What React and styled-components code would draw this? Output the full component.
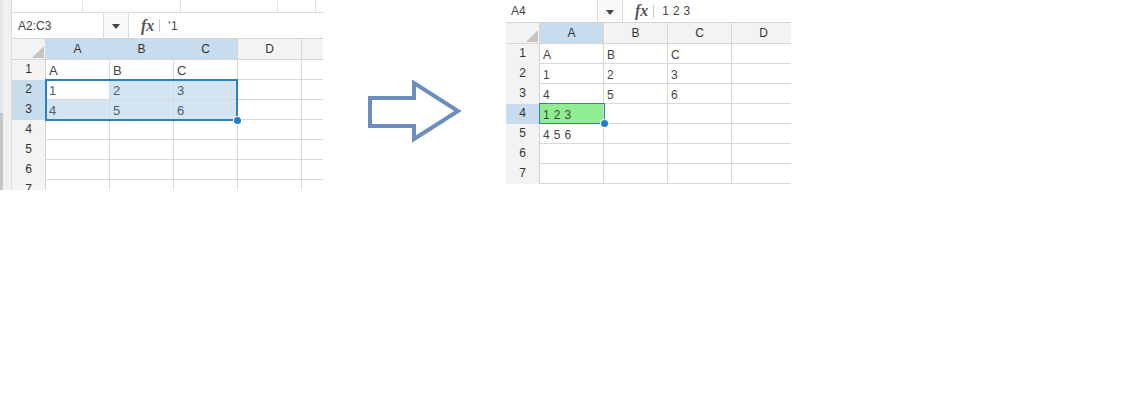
import React from 'react';
import styled, { createGlobalStyle } from 'styled-components';

const GlobalStyle = createGlobalStyle`
  *, *::before, *::after { box-sizing: border-box; }
  html, body { margin: 0; padding: 0; background: #fff; }
  body { font-family: "Liberation Sans", Arial, sans-serif; color: #444; }
`;

const COLS = ['A', 'B', 'C', 'D', ''];

const Page = styled.div`
  width: 1130px;
  height: 413px;
  display: flex;
  align-items: flex-start;
  background: #fff;
`;

const LeftShot = styled.div`
  width: 323px;
  height: 190px;
  display: flex;
  overflow: hidden;
  flex-shrink: 0;
`;

const Gutter = styled.div`
  width: 12px;
  height: 100%;
  flex-shrink: 0;
  display: flex;
  flex-direction: column;
  background: #f0f0f0;
  border-right: 1px solid #dcdcdc;

  &::before {
    content: '';
    width: 3px;
    height: 113px;
    background: #e6e6e6;
  }
  &::after {
    content: '';
    width: 3px;
    flex: 1;
    background: #c4c4c4;
  }
`;

const Sheet = styled.div`
  flex: 1;
  display: flex;
  flex-direction: column;
  overflow: hidden;

  & > * { flex-shrink: 0; }
`;

const Ribbon = styled.div`
  height: 13px;
  display: flex;
  border-bottom: 1px solid #dcdcdc;
  margin-left: -12px;
`;

const RibbonGroup = styled.div`
  width: ${p => p.$w}px;
  border-right: 1px solid #e0e0e0;
  flex-shrink: 0;
`;

const FormulaBar = styled.div`
  height: ${p => p.$h}px;
  flex-shrink: 0;
  display: flex;
  align-items: stretch;
  border-bottom: 1px solid #d4d4d4;
  font-size: 12px;
`;

const NameBox = styled.div`
  width: ${p => p.$w}px;
  display: flex;
  align-items: center;
  padding-left: ${p => p.$pad}px;
  color: #444;
  border-right: 1px solid #dcdcdc;
`;

const DropButton = styled.div`
  width: 25px;
  display: flex;
  align-items: center;
  justify-content: center;
  background: #f9f9f9;
  border-right: 1px solid #dcdcdc;

  &::after {
    content: '';
    border-left: 4px solid transparent;
    border-right: 4px solid transparent;
    border-top: 5px solid #444;
    margin-top: 2px;
  }
`;

const Fx = styled.div`
  display: flex;
  align-items: center;
  padding-left: 12px;
  font-family: "Liberation Serif", "Times New Roman", serif;
  font-style: italic;
  font-weight: bold;
  font-size: 16px;
  color: #555;

  &::after {
    content: '';
    width: 1px;
    height: 13px;
    background: #c8c8c8;
    margin-left: 5px;
  }
`;

const FormulaText = styled.div`
  display: flex;
  align-items: center;
  padding-left: 8px;
  font-size: 12px;
  color: #444;
  letter-spacing: 0.3px;
`;

const Grid = styled.div`
  position: relative;
  flex-shrink: 0;
  display: grid;
  grid-template-columns: 34px repeat(5, 64px);
  grid-template-rows: 21px repeat(7, 20px);
`;

const Corner = styled.div`
  position: relative;
  background: #f3f3f3;
  border-right: 1px solid #d4d4d4;
  border-bottom: 1px solid #d4d4d4;

  &::after {
    content: '';
    position: absolute;
    right: 1px;
    bottom: 1px;
    border-left: 12px solid transparent;
    border-bottom: 12px solid #c4c4c4;
  }
`;

const ColHead = styled.div`
  display: flex;
  align-items: center;
  justify-content: center;
  font-size: 12px;
  color: #333;
  background: ${p => (p.$sel ? '#c7dcec' : '#f3f3f3')};
  border-right: 1px solid #d4d4d4;
  border-bottom: 1px solid #d4d4d4;
`;

const RowHead = styled.div`
  display: flex;
  align-items: center;
  justify-content: center;
  font-size: 12px;
  color: #333;
  background: ${p => (p.$sel ? '#c7dcec' : '#f3f3f3')};
  border-right: 1px solid #d4d4d4;
  padding-bottom: 2px;
`;

const Cell = styled.div`
  display: flex;
  align-items: flex-end;
  padding: 0 3px 1px;
  font-size: ${p => p.$fs}px;
  line-height: 14px;
  color: ${p => (p.$sel ? '#4d5d6e' : '#444')};
  background: ${p => p.$bg || '#fff'};
  border-right: 1px solid #d9d9d9;
  border-bottom: 1px solid #d9d9d9;
  white-space: nowrap;
  overflow: hidden;
  letter-spacing: ${p => (p.$spaced ? '0.4px' : '0')};
`;

const SelectionBox = styled.div`
  position: absolute;
  left: ${p => p.$x}px;
  top: ${p => p.$y}px;
  width: ${p => p.$w}px;
  height: ${p => p.$h}px;
  border: ${p => p.$bw}px solid #2a80c9;
  pointer-events: none;

  &::after {
    content: '';
    position: absolute;
    right: -${p => p.$bw + 3}px;
    bottom: -${p => p.$bw + 3}px;
    width: 7px;
    height: 7px;
    border-radius: 50%;
    background: #1f7fcc;
    box-shadow: 0 0 0 1px #fff;
  }
`;

const ArrowWrap = styled.div`
  margin: 80px 0 0 45px;
  width: 95px;
  height: 64px;
  flex-shrink: 0;
  display: flex;
`;

const RightShot = styled.div`
  margin-left: 43px;
  width: 285px;
  height: 185px;
  flex-shrink: 0;
  display: flex;
  flex-direction: column;
  overflow: hidden;
`;

const leftData = [
  ['A', 'B', 'C', '', ''],
  ['1', '2', '3', '', ''],
  ['4', '5', '6', '', ''],
  ['', '', '', '', ''],
  ['', '', '', '', ''],
  ['', '', '', '', ''],
  ['', '', '', '', ''],
];

const rightData = [
  ['A', 'B', 'C', '', ''],
  ['1', '2', '3', '', ''],
  ['4', '5', '6', '', ''],
  ['1 2 3', '', '', '', ''],
  ['4 5 6', '', '', '', ''],
  ['', '', '', '', ''],
  ['', '', '', '', ''],
];

function SheetGrid({ data, selCols, selRows, inRange, fill, fs, children }) {
  return (
    <Grid>
      <Corner />
      {COLS.map((c, i) => (
        <ColHead key={i} $sel={selCols.includes(c)}>{c}</ColHead>
      ))}
      {data.map((row, r) => (
        <React.Fragment key={r}>
          <RowHead $sel={selRows.includes(r + 1)}>{r + 1}</RowHead>
          {row.map((v, c) => (
            <Cell
              key={c}
              $fs={fs}
              $sel={inRange(r, c)}
              $bg={fill(r, c)}
              $spaced={v.includes(' ')}
            >
              {v}
            </Cell>
          ))}
        </React.Fragment>
      ))}
      {children}
    </Grid>
  );
}

function Arrow() {
  return (
    <svg width="95" height="64" viewBox="368 80 95 64">
      <path
        d="M370 98 H414 V83 L458 111 L414 139 V126 H370 Z"
        fill="none"
        stroke="#6c8ebf"
        strokeWidth="4"
        strokeLinejoin="miter"
      />
    </svg>
  );
}

export default function App() {
  return (
    <Page>
      <GlobalStyle />
      <LeftShot>
        <Gutter />
        <Sheet>
          <Ribbon>
            <RibbonGroup $w={83} />
            <RibbonGroup $w={98} />
            <RibbonGroup $w={97} />
            <RibbonGroup $w={38} />
          </Ribbon>
          <FormulaBar $h={26}>
            <NameBox $w={92} $pad={6}>A2:C3</NameBox>
            <DropButton />
            <Fx>fx</Fx>
            <FormulaText>'1</FormulaText>
          </FormulaBar>
          <SheetGrid
            data={leftData}
            fs={13}
            selCols={['A', 'B', 'C']}
            selRows={[2, 3]}
            inRange={(r, c) => r >= 1 && r <= 2 && c <= 2}
            fill={(r, c) =>
              r >= 1 && r <= 2 && c <= 2 && !(r === 1 && c === 0) ? '#d3e5f3' : null
            }
          >
            <SelectionBox $x={33} $y={40} $w={193} $h={42} $bw={2} />
          </SheetGrid>
        </Sheet>
      </LeftShot>

      <ArrowWrap>
        <Arrow />
      </ArrowWrap>

      <RightShot>
        <FormulaBar $h={23}>
          <NameBox $w={92} $pad={5}>A4</NameBox>
          <DropButton />
          <Fx>fx</Fx>
          <FormulaText>1 2 3</FormulaText>
        </FormulaBar>
        <SheetGrid
          data={rightData}
          fs={12}
          selCols={['A']}
          selRows={[4]}
          inRange={() => false}
          fill={(r, c) => (r === 3 && c === 0 ? '#90ee90' : null)}
        >
          <SelectionBox $x={33} $y={80} $w={66} $h={21} $bw={1} />
        </SheetGrid>
      </RightShot>
    </Page>
  );
}
